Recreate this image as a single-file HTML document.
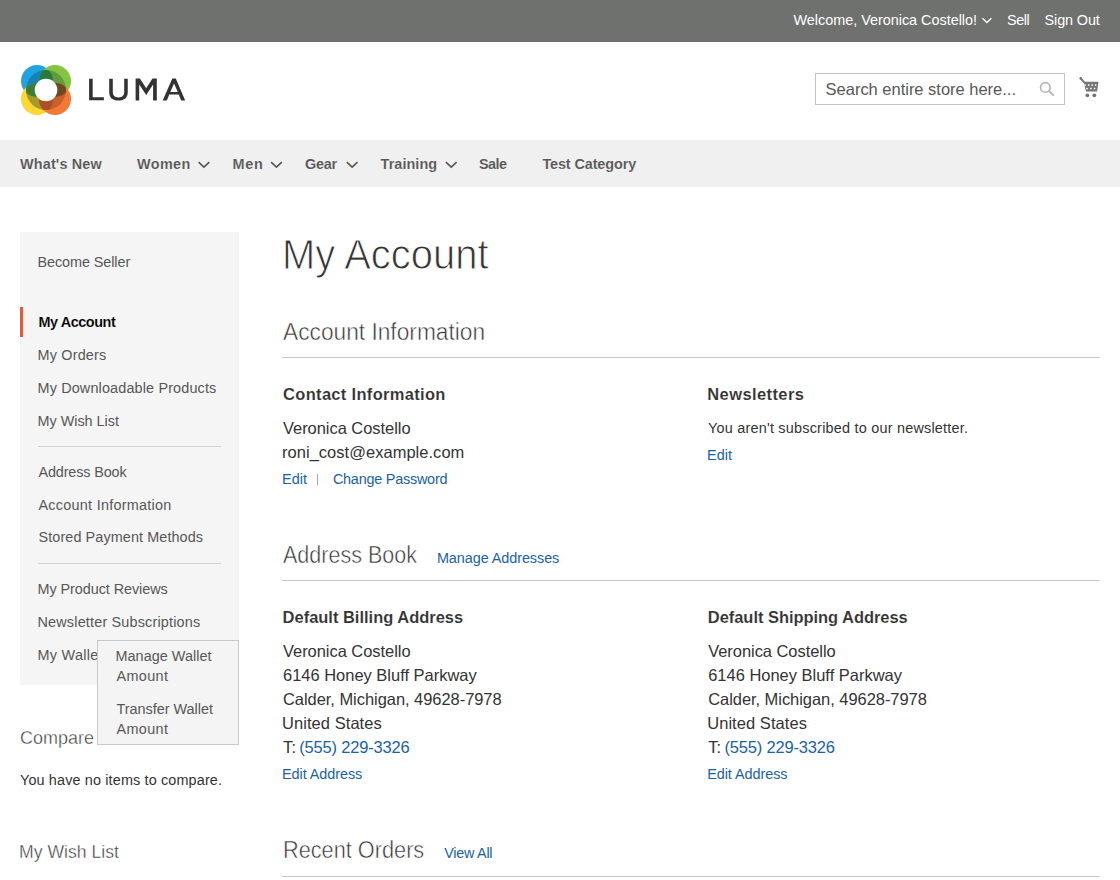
<!DOCTYPE html>
<html><head><meta charset="utf-8">
<style>
html,body{margin:0;padding:0;width:1120px;height:880px;overflow:hidden;background:#fff;font-family:"Liberation Sans",sans-serif;}
.a{position:absolute}
.t{position:absolute;white-space:nowrap;z-index:2}
</style></head><body>
<div class="a" style="left:0;top:0;width:1120px;height:42px;background:#6e716e"></div>
<svg class="a" style="left:0;top:0;z-index:2" width="1120" height="200">
 <!-- top chevron -->
 <polyline points="982.5,18.3 986.9,22.5 991.4,18.2" fill="none" stroke="#fff" stroke-width="1.3"/>
 <!-- nav chevrons -->
 <g fill="none" stroke="#575757" stroke-width="1.6">
  <polyline points="198.6,162.1 203.95,167.2 209.3,162.1"/>
  <polyline points="271.1,162.1 276.45,167.2 281.8,162.1"/>
  <polyline points="346.8,162.1 352.15,167.2 357.5,162.1"/>
  <polyline points="445.9,162.1 451.25,167.2 456.6,162.1"/>
 </g>
 <!-- search icon -->
 <circle cx="1045.3" cy="87.4" r="4.8" fill="none" stroke="#b3b3b3" stroke-width="1.6"/>
 <line x1="1048.6" y1="90.6" x2="1053.8" y2="95.6" stroke="#b3b3b3" stroke-width="1.8"/>
 <!-- cart -->
 <g fill="#757575">
  <circle cx="1080.8" cy="78.4" r="1.35"/>
  <line x1="1080.8" y1="78.4" x2="1084.4" y2="82.6" stroke="#757575" stroke-width="1.8"/>
  <path d="M1083.6,81.8 L1098.5,81.8 L1097.1,91.4 L1086.0,91.4 Z"/>
  <circle cx="1087.4" cy="95.3" r="1.9"/>
  <circle cx="1094.3" cy="95.3" r="1.9"/>
 </g>
 <g fill="#fff">
  <rect x="1084.4" y="84.3" width="1.5" height="1.5"/><rect x="1087.9" y="84.3" width="1.5" height="1.5"/><rect x="1091.4" y="84.3" width="1.5" height="1.5"/><rect x="1094.9" y="84.3" width="1.5" height="1.5"/>
  <rect x="1086.3" y="87.8" width="1.5" height="1.5"/><rect x="1090.2" y="87.8" width="1.5" height="1.5"/><rect x="1093.8" y="87.8" width="1.5" height="1.5"/>
 </g>
 <!-- LUMA -->
 <g fill="#333" fill-rule="evenodd">
  <path d="M89.1,78.7 H92.7 V97.2 H103.9 V100.3 H89.1 Z"/>
  <path d="M109.2,78.7 V92 C109.2,97.6 112.6,100.6 118.5,100.6 C124.4,100.6 127.75,97.6 127.75,92 V78.7 H124.2 V92 C124.2,95.7 122.1,97.4 118.5,97.4 C114.9,97.4 112.8,95.7 112.8,92 V78.7 Z"/>
  <path d="M135.6,100.4 V78.4 H139.9 L146.2,88.3 L152.5,78.4 H156.8 V100.4 H153.1 V84.5 L146.2,95 L139.2,84.5 V100.4 Z"/>
  <path d="M162.7,100.4 L172.3,78.4 H175.8 L185.2,100.4 H181.2 L178.7,94.5 H169.3 L166.8,100.4 Z M174.05,83.6 L177.8,92.1 H170.3 Z"/>
 </g>
</svg>
<!-- logo -->
<svg class="a" style="left:21px;top:65px;z-index:2" width="50" height="50" viewBox="0 0 50 50">
 <defs>
  <clipPath id="cb"><circle cx="16" cy="16" r="16"/></clipPath>
  <clipPath id="cg"><circle cx="34" cy="16" r="16"/></clipPath>
  <clipPath id="cy"><circle cx="16" cy="34" r="16"/></clipPath>
  <clipPath id="co"><circle cx="34" cy="34" r="16"/></clipPath>
  <clipPath id="cc"><circle cx="25" cy="25" r="20"/></clipPath>
 </defs>
 <circle cx="16" cy="16" r="16" fill="#1ea5e0"/>
 <circle cx="34" cy="16" r="16" fill="#84c441"/>
 <circle cx="16" cy="34" r="16" fill="#fdd835"/>
 <circle cx="34" cy="34" r="16" fill="#f27a36"/>
 <g clip-path="url(#cc)">
  <circle cx="16" cy="16" r="16" fill="#1682b8"/>
  <circle cx="34" cy="16" r="16" fill="#619c3b"/>
  <circle cx="16" cy="34" r="16" fill="#a69a2e"/>
  <circle cx="34" cy="34" r="16" fill="#c9602b"/>
 </g>
 <g clip-path="url(#cc)">
 <g clip-path="url(#cb)"><circle cx="34" cy="16" r="16" fill="#2a7a3b"/><circle cx="16" cy="34" r="16" fill="#3b7d36"/></g>
 <g clip-path="url(#co)"><circle cx="34" cy="16" r="16" fill="#6e4a1f"/><circle cx="16" cy="34" r="16" fill="#ad4f26"/></g>
 </g>
 <circle cx="25" cy="25" r="11.3" fill="#fff"/>
</svg>
<!-- search box -->
<div class="a" style="left:815px;top:73px;width:248px;height:30px;border:1px solid #c2c2c2;background:#fff"></div>
<!-- nav -->
<div class="a" style="left:0;top:140px;width:1120px;height:47px;background:#f0f0f0"></div>
<!-- sidebar -->
<div class="a" style="left:20px;top:232px;width:219px;height:453px;background:#f5f5f5"></div>
<div class="a" style="left:20px;top:307px;width:3px;height:30px;background:#e65a3b;z-index:2"></div>
<div class="a" style="left:38px;top:446px;width:183px;height:1px;background:#d1d1d1"></div>
<div class="a" style="left:38px;top:563px;width:183px;height:1px;background:#d1d1d1"></div>
<!-- popup -->
<div class="a" style="left:97px;top:640px;width:140px;height:103px;border:1px solid #c9c9c9;background:#f4f4f4;z-index:2"></div>
<!-- main borders -->
<div class="a" style="left:282px;top:357px;width:818px;height:1px;background:#c6c6c6"></div>
<div class="a" style="left:282px;top:580px;width:818px;height:1px;background:#c6c6c6"></div>
<div class="a" style="left:282px;top:876px;width:818px;height:1px;background:#c6c6c6"></div>
<div class="a" style="left:317px;top:474px;width:1px;height:11px;background:#a6a6a6"></div>
<div class="t" style="left:793.50px;top:12.03px;font-size:14.42px;line-height:17px;font-weight:400;color:#fff;letter-spacing:-0.015px;">Welcome, Veronica Costello!</div>
<div class="t" style="left:1007.00px;top:12.03px;font-size:14.42px;line-height:17px;font-weight:400;color:#fff;letter-spacing:-0.441px;">Sell</div>
<div class="t" style="left:1044.60px;top:12.03px;font-size:14.42px;line-height:17px;font-weight:400;color:#fff;letter-spacing:-0.122px;">Sign Out</div>
<div class="t" style="left:825.60px;top:79.03px;font-size:16.48px;line-height:20px;font-weight:400;color:#575757;letter-spacing:-0.001px;">Search entire store here...</div>
<div class="t" style="left:20.00px;top:156.02px;font-size:14.42px;line-height:17px;font-weight:700;color:#575757;letter-spacing:0.160px;-webkit-text-stroke:0.1px #f0f0f0;">What's New</div>
<div class="t" style="left:137.00px;top:156.02px;font-size:14.42px;line-height:17px;font-weight:700;color:#575757;letter-spacing:0.385px;-webkit-text-stroke:0.1px #f0f0f0;">Women</div>
<div class="t" style="left:232.50px;top:156.02px;font-size:14.42px;line-height:17px;font-weight:700;color:#575757;letter-spacing:0.744px;-webkit-text-stroke:0.1px #f0f0f0;">Men</div>
<div class="t" style="left:305.00px;top:156.02px;font-size:14.42px;line-height:17px;font-weight:700;color:#575757;letter-spacing:-0.210px;-webkit-text-stroke:0.1px #f0f0f0;">Gear</div>
<div class="t" style="left:380.60px;top:156.02px;font-size:14.42px;line-height:17px;font-weight:700;color:#575757;letter-spacing:0.067px;-webkit-text-stroke:0.1px #f0f0f0;">Training</div>
<div class="t" style="left:479.00px;top:156.02px;font-size:14.42px;line-height:17px;font-weight:700;color:#575757;letter-spacing:-0.541px;-webkit-text-stroke:0.1px #f0f0f0;">Sale</div>
<div class="t" style="left:542.40px;top:156.02px;font-size:14.42px;line-height:17px;font-weight:700;color:#575757;letter-spacing:-0.099px;-webkit-text-stroke:0.1px #f0f0f0;">Test Category</div>
<div class="t" style="left:37.50px;top:254.03px;font-size:14.42px;line-height:17px;font-weight:400;color:#575757;letter-spacing:-0.082px;">Become Seller</div>
<div class="t" style="left:38.50px;top:314.03px;font-size:14.42px;line-height:17px;font-weight:700;color:#000;letter-spacing:-0.427px;-webkit-text-stroke:0.1px #f5f5f5;">My Account</div>
<div class="t" style="left:37.50px;top:347.03px;font-size:14.42px;line-height:17px;font-weight:400;color:#575757;letter-spacing:0.184px;">My Orders</div>
<div class="t" style="left:37.50px;top:380.02px;font-size:14.42px;line-height:17px;font-weight:400;color:#575757;letter-spacing:0.149px;">My Downloadable Products</div>
<div class="t" style="left:37.50px;top:413.03px;font-size:14.42px;line-height:17px;font-weight:400;color:#575757;letter-spacing:-0.022px;">My Wish List</div>
<div class="t" style="left:38.50px;top:464.03px;font-size:14.42px;line-height:17px;font-weight:400;color:#575757;letter-spacing:-0.144px;">Address Book</div>
<div class="t" style="left:38.50px;top:497.03px;font-size:14.42px;line-height:17px;font-weight:400;color:#575757;letter-spacing:0.261px;">Account Information</div>
<div class="t" style="left:38.50px;top:529.03px;font-size:14.42px;line-height:17px;font-weight:400;color:#575757;letter-spacing:0.093px;">Stored Payment Methods</div>
<div class="t" style="left:37.50px;top:581.03px;font-size:14.42px;line-height:17px;font-weight:400;color:#575757;letter-spacing:-0.064px;">My Product Reviews</div>
<div class="t" style="left:37.50px;top:614.02px;font-size:14.42px;line-height:17px;font-weight:400;color:#575757;letter-spacing:0.181px;">Newsletter Subscriptions</div>
<div class="t" style="left:37.50px;top:647.03px;font-size:14.42px;line-height:17px;font-weight:400;color:#575757;letter-spacing:0.288px;z-index:1">My Wallet</div>
<div class="t" style="left:115.50px;top:648.02px;font-size:14.42px;line-height:17px;font-weight:400;color:#575757;letter-spacing:0.037px;z-index:3">Manage Wallet</div>
<div class="t" style="left:116.50px;top:668.02px;font-size:14.42px;line-height:17px;font-weight:400;color:#575757;letter-spacing:0.371px;z-index:3">Amount</div>
<div class="t" style="left:116.50px;top:701.03px;font-size:14.42px;line-height:17px;font-weight:400;color:#575757;letter-spacing:-0.007px;z-index:3">Transfer Wallet</div>
<div class="t" style="left:116.50px;top:721.03px;font-size:14.42px;line-height:17px;font-weight:400;color:#575757;letter-spacing:0.371px;z-index:3">Amount</div>
<div class="t" style="left:20.00px;top:727.02px;font-size:18.54px;line-height:22px;font-weight:400;color:#333;letter-spacing:0.000px;transform:scaleX(0.9696);transform-origin:0 0;-webkit-text-stroke:0.41px #fff;">Compare</div>
<div class="t" style="left:20.00px;top:772.03px;font-size:14.42px;line-height:17px;font-weight:400;color:#333;letter-spacing:0.140px;">You have no items to compare.</div>
<div class="t" style="left:19.05px;top:841.02px;font-size:18.54px;line-height:22px;font-weight:400;color:#333;letter-spacing:0.000px;transform:scaleX(0.9507);transform-origin:0 0;-webkit-text-stroke:0.41px #fff;">My Wish List</div>
<div class="t" style="left:281.73px;top:230.02px;font-size:41.82px;line-height:50px;font-weight:400;color:#333;letter-spacing:0.000px;transform:scaleX(0.9554);transform-origin:0 0;-webkit-text-stroke:0.92px #fff;">My Account</div>
<div class="t" style="left:282.50px;top:317.03px;font-size:24.02px;line-height:29px;font-weight:400;color:#333;letter-spacing:0.000px;transform:scaleX(0.9462);transform-origin:0 0;-webkit-text-stroke:0.53px #fff;">Account Information</div>
<div class="t" style="left:283.10px;top:384.03px;font-size:16.48px;line-height:20px;font-weight:700;color:#333;letter-spacing:0.323px;-webkit-text-stroke:0.1px #fff;">Contact Information</div>
<div class="t" style="left:283.00px;top:418.02px;font-size:16.48px;line-height:20px;font-weight:400;color:#333;letter-spacing:-0.038px;">Veronica Costello</div>
<div class="t" style="left:282.00px;top:442.03px;font-size:16.48px;line-height:20px;font-weight:400;color:#333;letter-spacing:0.042px;">roni_cost@example.com</div>
<div class="t" style="left:282.00px;top:471.02px;font-size:14.42px;line-height:17px;font-weight:400;color:#1a62a3;letter-spacing:0.059px;">Edit</div>
<div class="t" style="left:332.90px;top:471.02px;font-size:14.42px;line-height:17px;font-weight:400;color:#1a62a3;letter-spacing:-0.222px;">Change Password</div>
<div class="t" style="left:707.25px;top:384.03px;font-size:16.48px;line-height:20px;font-weight:700;color:#333;letter-spacing:0.421px;-webkit-text-stroke:0.1px #fff;">Newsletters</div>
<div class="t" style="left:708.00px;top:420.02px;font-size:14.42px;line-height:17px;font-weight:400;color:#333;letter-spacing:0.224px;">You aren't subscribed to our newsletter.</div>
<div class="t" style="left:707.00px;top:447.02px;font-size:14.42px;line-height:17px;font-weight:400;color:#1a62a3;letter-spacing:0.059px;">Edit</div>
<div class="t" style="left:283.00px;top:540.02px;font-size:24.02px;line-height:29px;font-weight:400;color:#333;letter-spacing:0.000px;transform:scaleX(0.8963);transform-origin:0 0;-webkit-text-stroke:0.53px #fff;">Address Book</div>
<div class="t" style="left:436.90px;top:550.03px;font-size:14.42px;line-height:17px;font-weight:400;color:#1a62a3;letter-spacing:-0.062px;">Manage Addresses</div>
<div class="t" style="left:282.60px;top:607.02px;font-size:16.48px;line-height:20px;font-weight:700;color:#333;letter-spacing:-0.001px;-webkit-text-stroke:0.1px #fff;">Default Billing Address</div>
<div class="t" style="left:283.00px;top:641.02px;font-size:16.48px;line-height:20px;font-weight:400;color:#333;letter-spacing:-0.038px;">Veronica Costello</div>
<div class="t" style="left:283.00px;top:665.03px;font-size:16.48px;line-height:20px;font-weight:400;color:#333;letter-spacing:-0.002px;">6146 Honey Bluff Parkway</div>
<div class="t" style="left:283.00px;top:689.03px;font-size:16.48px;line-height:20px;font-weight:400;color:#333;letter-spacing:-0.040px;">Calder, Michigan, 49628-7978</div>
<div class="t" style="left:282.00px;top:713.03px;font-size:16.48px;line-height:20px;font-weight:400;color:#333;letter-spacing:0.072px;">United States</div>
<div class="t" style="left:283.00px;top:737.03px;font-size:16.48px;line-height:20px;font-weight:400;color:#333;letter-spacing:0.167px;">T:</div>
<div class="t" style="left:299.30px;top:737.03px;font-size:16.48px;line-height:20px;font-weight:400;color:#1a62a3;letter-spacing:-0.166px;">(555) 229-3326</div>
<div class="t" style="left:282.00px;top:766.02px;font-size:14.42px;line-height:17px;font-weight:400;color:#1a62a3;letter-spacing:-0.052px;">Edit Address</div>
<div class="t" style="left:707.80px;top:607.02px;font-size:16.48px;line-height:20px;font-weight:700;color:#333;letter-spacing:-0.032px;-webkit-text-stroke:0.1px #fff;">Default Shipping Address</div>
<div class="t" style="left:708.20px;top:641.02px;font-size:16.48px;line-height:20px;font-weight:400;color:#333;letter-spacing:-0.038px;">Veronica Costello</div>
<div class="t" style="left:708.20px;top:665.03px;font-size:16.48px;line-height:20px;font-weight:400;color:#333;letter-spacing:-0.002px;">6146 Honey Bluff Parkway</div>
<div class="t" style="left:708.20px;top:689.03px;font-size:16.48px;line-height:20px;font-weight:400;color:#333;letter-spacing:-0.040px;">Calder, Michigan, 49628-7978</div>
<div class="t" style="left:707.20px;top:713.03px;font-size:16.48px;line-height:20px;font-weight:400;color:#333;letter-spacing:0.072px;">United States</div>
<div class="t" style="left:708.20px;top:737.03px;font-size:16.48px;line-height:20px;font-weight:400;color:#333;letter-spacing:0.167px;">T:</div>
<div class="t" style="left:724.50px;top:737.03px;font-size:16.48px;line-height:20px;font-weight:400;color:#1a62a3;letter-spacing:-0.166px;">(555) 229-3326</div>
<div class="t" style="left:707.20px;top:766.02px;font-size:14.42px;line-height:17px;font-weight:400;color:#1a62a3;letter-spacing:-0.052px;">Edit Address</div>
<div class="t" style="left:282.70px;top:835.02px;font-size:24.02px;line-height:29px;font-weight:400;color:#333;letter-spacing:0.000px;transform:scaleX(0.9043);transform-origin:0 0;-webkit-text-stroke:0.53px #fff;">Recent Orders</div>
<div class="t" style="left:444.30px;top:845.03px;font-size:14.42px;line-height:17px;font-weight:400;color:#1a62a3;letter-spacing:-0.282px;">View All</div>
</body></html>
